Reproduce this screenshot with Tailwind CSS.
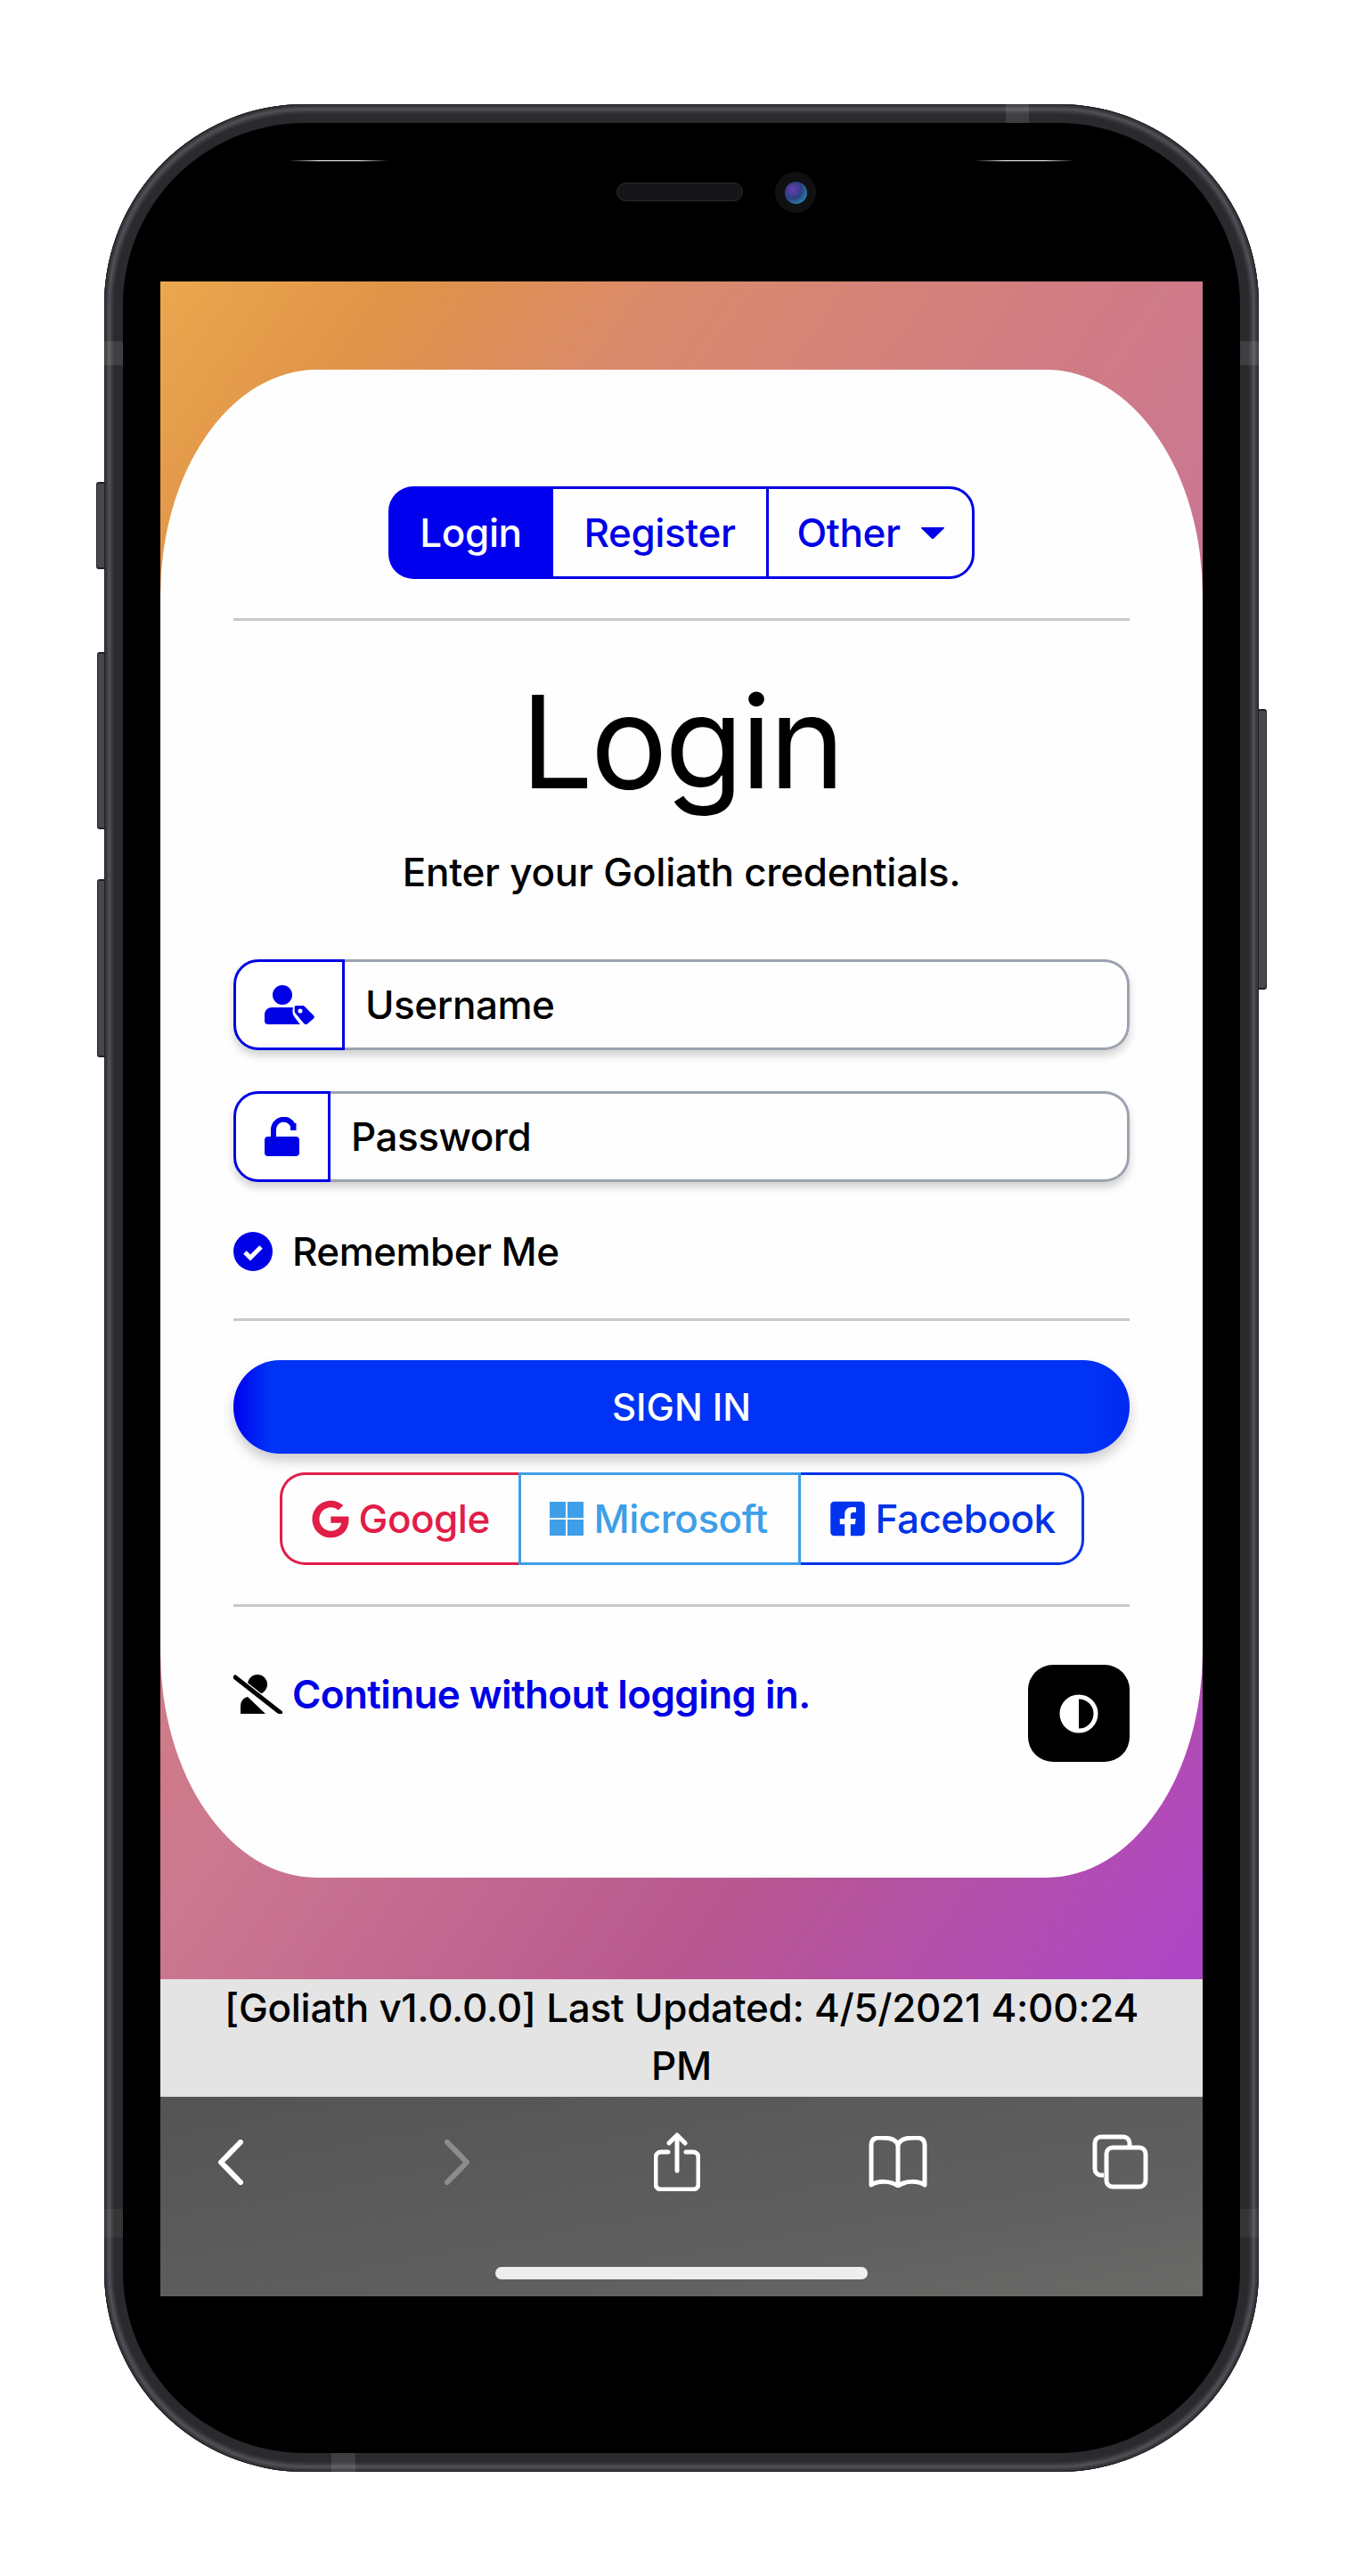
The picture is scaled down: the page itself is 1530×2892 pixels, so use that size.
<!DOCTYPE html>
<html lang="en">
<head>
    <meta charset="UTF-8">
    <meta name="viewport" content="width=device-width, initial-scale=1.0">
    <title>Goliath Login</title>
    <script src="https://cdn.jsdelivr.net/npm/@tailwindcss/browser@4"></script>
</head>
<body class="bg-white font-['Inter','Liberation_Sans',sans-serif] text-black">
    <div class="relative ml-[117px] mt-[117px] w-[1296px] h-[2658px]">
        <!-- side buttons -->
        <div class="absolute left-[-9px] top-[424px] w-[10px] h-[98px] rounded-l-[3px] bg-[#47474d] border-y-2 border-l border-[#222226]"></div>
        <div class="absolute left-[-8px] top-[615px] w-[9px] h-[199px] rounded-l-[3px] bg-[#47474d] border-y-2 border-l border-[#222226]"></div>
        <div class="absolute left-[-8px] top-[870px] w-[9px] h-[200px] rounded-l-[3px] bg-[#47474d] border-y-2 border-l border-[#222226]"></div>
        <div class="absolute right-[-9px] top-[679px] w-[10px] h-[315px] rounded-r-[3px] bg-[#47474d] border-y-2 border-r border-[#222226]"></div>

        <!-- phone frame -->
        <div class="relative w-full h-full rounded-[225px] bg-[#2a2a2e] p-[21px] shadow-[inset_0_0_0_1px_#1f1f22,inset_0_0_2px_4px_#37373c,inset_0_0_3px_7px_#55555b,inset_0_0_3px_10px_#3c3c41]">
            <div class="w-full h-full rounded-[204px] bg-black pt-[178px] pl-[42px] pr-[42px]">
                <!-- screen -->
                <div class="w-[1170px] h-[2262px] flex flex-col overflow-hidden">
                    <div class="h-[1906px] pt-[99px] bg-[linear-gradient(125deg,#eaa84e_0%,#e09348_11%,#da8a6c_23%,#d07c84_42%,#cc7890_52%,#b85890_76%,#ad45c8_100%)]">
                        <div class="h-[1693px] rounded-[15%] bg-[#fefefe] px-[82px] pt-[131px]">
                            <!-- tabs -->
                            <div class="flex justify-center">
                                <div class="flex h-[104px] text-[44px] font-medium tracking-[-0.4px] text-[#0000e6]">
                                    <a class="flex items-center justify-center w-[185px] rounded-l-[28px] bg-[#0000ee] text-white">Login</a>
                                    <a class="flex items-center justify-center w-[239px] border-y-[3px] border-[#0000e6]">Register</a>
                                    <a class="flex items-center justify-center gap-[23px] w-[234px] border-[3px] border-[#0000e6] rounded-r-[28px]">Other
                                        <svg class="w-[26px] h-[13px]" viewBox="0 0 26 13"><path d="M1 0h24q2 0 .5 1.600L14.300 12.400q-1.300 1-2.600 0L.5 1.600Q-1 0 1 0z" fill="#0000e6"/></svg>
                                    </a>
                                </div>
                            </div>
                            <hr class="mt-[44px] border-0 h-[3px] bg-[#c9c9c9]">

                            <h1 class="mt-[36px] h-[200px] text-center text-[144px] leading-[200px] font-normal tracking-[-3px]">Login</h1>
                            <p class="mt-[16px] h-[60px] text-center text-[44px] leading-[60px] font-medium tracking-[-0.25px]">Enter your Goliath credentials.</p>

                            <!-- username -->
                            <div class="mt-[68px] flex h-[102px] rounded-[28px] shadow-[0_6px_10px_rgba(0,0,0,0.18)]">
                                <div class="w-[125px] flex items-center justify-center rounded-l-[28px] border-[3px] border-[#0000e6] bg-white">
                                    <svg class="w-[56px] h-[44px]" viewBox="0 0 56 44" fill="#0000e6">
                                        <circle cx="20" cy="11" r="11"/>
                                        <path d="M8 25h24c-1 3-.8 7 1 10l6 8c.3.4.5.6.8 1H4a4 4 0 0 1-4-4v-7a8 8 0 0 1 8-8z"/>
                                        <path d="M35 23h8a3 3 0 0 1 2 .9l10 10a2.500 2.500 0 0 1 0 3.500l-7 6a2.500 2.500 0 0 1-3.500 0l-10-12a3 3 0 0 1-.8-2v-5a1.500 1.500 0 0 1 1.300-1.400zM40 26.500a2.500 2.500 0 1 0 0 5 2.500 2.500 0 0 0 0-5z" fill-rule="evenodd"/>
                                    </svg>
                                </div>
                                <div class="flex-1 flex items-center pl-[23px] rounded-r-[28px] border-y-[3px] border-r-[3px] border-[#9ca3af] text-[44px] font-medium tracking-[-0.45px]">Username</div>
                            </div>

                            <!-- password -->
                            <div class="mt-[46px] flex h-[102px] rounded-[28px] shadow-[0_6px_10px_rgba(0,0,0,0.18)]">
                                <div class="w-[109px] flex items-center justify-center rounded-l-[28px] border-[3px] border-[#0000e6] bg-white">
                                    <svg class="w-[39px] h-[44px]" viewBox="0 0 39 44" fill="#0000e6">
                                        <path d="M10 23v-9a11.500 11.500 0 0 1 22-4.500" fill="none" stroke="#0000e6" stroke-width="6"/>
                                        <path d="M29 7h6.500v8h-6.500z"/>
                                        <rect x="0" y="22" width="39" height="22" rx="4"/>
                                    </svg>
                                </div>
                                <div class="flex-1 flex items-center pl-[23px] rounded-r-[28px] border-y-[3px] border-r-[3px] border-[#9ca3af] text-[44px] font-medium tracking-[-0.5px]">Password</div>
                            </div>

                            <!-- remember -->
                            <div class="mt-[56px] flex items-center gap-[22px] h-[44px] text-[44px] font-medium tracking-[-0.55px]">
                                <svg class="w-[44px] h-[44px]" viewBox="0 0 44 44">
                                    <circle cx="22" cy="22" r="22" fill="#0000e6"/>
                                    <path d="M13 23l6 6 12-12" fill="none" stroke="#fff" stroke-width="5"/>
                                </svg>
                                <span>Remember Me</span>
                            </div>
                            <hr class="mt-[53px] border-0 h-[3px] bg-[#c9c9c9]">

                            <button class="mt-[44px] w-full h-[105px] rounded-[52px] bg-[linear-gradient(90deg,#0000f0_0%,#0033f6_4%,#0033f6_96%,#0028f2_100%)] text-white text-[42px] font-medium shadow-[0_8px_14px_rgba(0,0,0,0.2)]">SIGN IN</button>

                            <!-- social logins -->
                            <div class="mt-[21px] flex justify-center h-[104px] text-[44px] font-medium tracking-[-0.5px]">
                                <a class="flex items-center gap-[11px] w-[268px] pl-[33px] rounded-l-[28px] border-y-[3px] border-l-[3px] border-[#e11d48] text-[#e11d48]">
                                    <svg class="w-[42px] h-[43px]" viewBox="0 0 488 512" fill="#e11d48"><path d="M488 261.800C488 403.300 391.100 504 248 504 110.800 504 0 393.200 0 256S110.800 8 248 8c66.800 0 123 24.500 166.300 64.900l-67.500 64.900C258.500 52.600 94.300 116.600 94.300 256c0 86.500 69.100 156.600 153.700 156.600 98.200 0 135-70.400 140.800-106.900H248v-85.300h236.100c2.300 12.700 3.900 24.900 3.900 41.400z"/></svg>
                                    <span>Google</span>
                                </a>
                                <a class="flex items-center gap-[12px] w-[317px] pl-[32px] border-[3px] border-[#3f9ee8] text-[#3f9ee8]">
                                    <svg class="w-[38px] h-[38px]" viewBox="0 0 38 38" fill="#3f9ee8">
                                        <rect width="18" height="18"/><rect x="20" width="18" height="18"/><rect y="20" width="18" height="18"/><rect x="20" y="20" width="18" height="18"/>
                                    </svg>
                                    <span>Microsoft</span>
                                </a>
                                <a class="flex items-center gap-[12px] w-[318px] pl-[33px] rounded-r-[28px] border-y-[3px] border-r-[3px] border-[#0033e6] text-[#0033e6]">
                                    <svg class="w-[39px] h-[44px]" viewBox="0 0 448 512" fill="#0033f0"><path d="M400 32H48A48 48 0 0 0 0 80v352a48 48 0 0 0 48 48h137.250V327.690h-63V256h63v-54.640c0-62.150 37-96.480 93.670-96.480 27.140 0 55.520 4.840 55.520 4.840v61h-31.270c-30.810 0-40.420 19.120-40.420 38.730V256h68.780l-11 71.690h-57.780V480H400a48 48 0 0 0 48-48V80a48 48 0 0 0-48-48z"/></svg>
                                    <span>Facebook</span>
                                </a>
                            </div>
                            <hr class="mt-[44px] border-0 h-[3px] bg-[#c9c9c9]">

                            <div class="mt-[65px] flex justify-between items-start">
                                <a class="mt-[11px] flex items-center gap-[11px] h-[44px] text-[44px] font-semibold tracking-[-0.6px] text-[#0000e6]">
                                    <svg class="w-[55px] h-[44px]" viewBox="0 0 55 44">
                                        <circle cx="27" cy="11" r="11"/>
                                        <path d="M8 44v-8a10 10 0 0 1 8-11l20 19z"/>
                                        <path d="M2 4l50 39" stroke="#fff" stroke-width="9"/>
                                        <path d="M2 3l51 40" stroke="#000" stroke-width="5" stroke-linecap="round"/>
                                    </svg>
                                    <span>Continue without logging in.</span>
                                </a>
                                <button class="w-[114px] h-[109px] rounded-[28px] bg-black flex items-center justify-center">
                                    <svg class="w-[44px] h-[44px]" viewBox="0 0 44 44">
                                        <circle cx="22" cy="22" r="19" fill="none" stroke="#fff" stroke-width="5"/>
                                        <path d="M22 3a19 19 0 0 0 0 38z" fill="#fff"/>
                                    </svg>
                                </button>
                            </div>
                        </div>
                    </div>

                    <!-- footer text -->
                    <div class="h-[132px] bg-[#e4e4e4] text-center text-[44px] leading-[65px] font-medium tracking-[-0.3px]">
                        <div class="mx-auto w-[1060px]">[Goliath v1.0.0.0] Last Updated: 4/5/2021 4:00:24 PM</div>
                    </div>

                    <!-- safari toolbar -->
                    <div class="flex-1 pt-[38px] bg-[linear-gradient(170deg,#545455_0%,#5b5b5b_40%,#606060_70%,#6a6a68_100%)]">
                        <div class="flex items-center h-[70px] pl-[64px]">
                            <svg class="w-[29px] h-[51px]" viewBox="0 0 29 51"><path d="M26 3L4 25.500 26 48" fill="none" stroke="#fff" stroke-width="6" stroke-linecap="round" stroke-linejoin="round"/></svg>
                            <svg class="ml-[226px] w-[29px] h-[51px]" viewBox="0 0 29 51"><path d="M3 3l22 22.500L3 48" fill="none" stroke="#8c8c8c" stroke-width="6" stroke-linecap="round" stroke-linejoin="round"/></svg>
                            <svg class="ml-[206px] w-[52px] h-[66px]" viewBox="0 0 52 66" fill="none" stroke="#fff" stroke-width="5" stroke-linecap="round" stroke-linejoin="round">
                                <path d="M16 22H8a6 6 0 0 0-6 6v30a6 6 0 0 0 6 6h36a6 6 0 0 0 6-6V28a6 6 0 0 0-6-6h-8"/>
                                <path d="M26 43V3M17 12l9-9 9 9"/>
                            </svg>
                            <svg class="ml-[189px] w-[66px] h-[58px]" viewBox="0 0 66 58" fill="none" stroke="#fff" stroke-width="5" stroke-linejoin="round">
                                <path d="M33 10C30 2 20 2 12 2 6 2 3 5 3 10v45c8-5 22-5 30 1 8-6 22-6 30-1V10c0-5-3-8-9-8-8 0-18 0-21 8z"/>
                                <path d="M33 10v45"/>
                            </svg>
                            <svg class="ml-[185px] w-[63px] h-[62px]" viewBox="0 0 63 62" fill="none" stroke="#fff" stroke-width="5" stroke-linejoin="round">
                                <path d="M13 46H10a7 7 0 0 1-7-7V10a7 7 0 0 1 7-7h25a7 7 0 0 1 7 7v3"/>
                                <rect x="16" y="15" width="44" height="44" rx="7"/>
                            </svg>
                        </div>
                        <div class="mt-[83px] mx-auto w-[418px] h-[14px] rounded-full bg-[#eeeeee]"></div>
                    </div>
                </div>
            </div>

            <!-- earpiece, camera, antenna lines -->
            <div class="absolute left-[575px] top-[88px] w-[142px] h-[21px] rounded-full bg-[#161618] border border-[#2c2c2e]"></div>
            <div class="absolute left-[753px] top-[76px] w-[46px] h-[46px] rounded-full bg-[#101012] flex items-center justify-center">
                <div class="w-[25px] h-[25px] rounded-full bg-[radial-gradient(circle_at_35%_35%,#6a3fb0_0%,#2b3f80_45%,#2b7fa8_75%,#0c1430_100%)]"></div>
            </div>
            <div class="absolute left-[207px] top-[63px] w-[112px] h-[1px] bg-[linear-gradient(90deg,#00000000,#ffffff_30%,#ffffff_70%,#00000000)]"></div>
            <div class="absolute left-[977px] top-[63px] w-[112px] h-[1px] bg-[linear-gradient(90deg,#00000000,#ffffff_30%,#ffffff_70%,#00000000)]"></div>
            <div class="absolute left-[1012px] top-0 w-[26px] h-[21px] bg-white/10"></div>
            <div class="absolute left-0 top-[266px] w-[21px] h-[27px] bg-white/10"></div>
            <div class="absolute right-0 top-[266px] w-[21px] h-[27px] bg-white/10"></div>
            <div class="absolute left-[255px] bottom-0 w-[27px] h-[21px] bg-white/10"></div>
            <div class="absolute left-0 bottom-[263px] w-[21px] h-[32px] bg-white/5"></div>
            <div class="absolute right-0 bottom-[263px] w-[21px] h-[32px] bg-white/5"></div>
        </div>
    </div>
</body>
</html>
